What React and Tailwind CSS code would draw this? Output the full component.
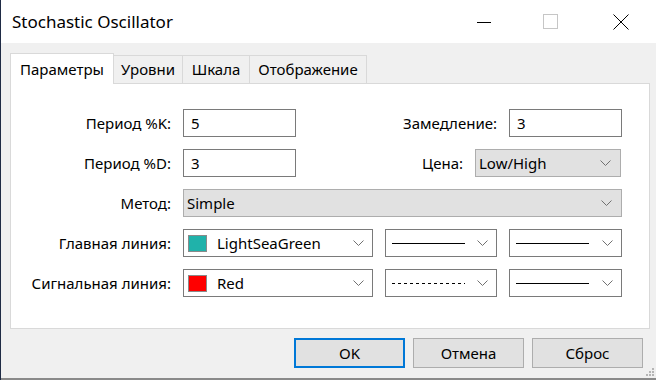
import React from "react";

const font = { fontFamily: '"Noto Sans", "Open Sans", sans-serif' };

function Chevron() {
  return (
    <svg width="11" height="6" viewBox="0 0 11 6" className="shrink-0">
      <polyline points="0.5,0.5 5.5,5.5 10.5,0.5" fill="none" stroke="#707070" strokeWidth="1" />
    </svg>
  );
}

function TextInput({ value, w }) {
  return (
    <div className={`${w} h-[28px] border border-[#7a7a7a] bg-white flex items-center pl-[7px] text-[15px] text-black`}>
      {value}
    </div>
  );
}

function GraySelect({ value, w }) {
  return (
    <div className={`${w} h-[28px] border border-[#adadad] bg-[#e1e1e1] flex items-center justify-between pl-[3px] pr-[9px] text-[15px] text-black`}>
      <span>{value}</span>
      <Chevron />
    </div>
  );
}

function ColorSelect({ color, name }) {
  return (
    <div className="w-[190px] h-[28px] border border-[#7a7a7a] bg-white flex items-center justify-between pl-[4px] pr-[8px] text-[15px] text-black">
      <div className="flex items-center">
        <div className="w-[19px] h-[17px] border border-[#8a8a8a]" style={{ backgroundColor: color }} />
        <span className="ml-[10px]">{name}</span>
      </div>
      <Chevron />
    </div>
  );
}

function LineSelect({ w, dashed, lineW }) {
  return (
    <div className={`${w} h-[28px] border border-[#7a7a7a] bg-white flex items-center justify-between pl-[6px] pr-[8px]`}>
      <svg width={lineW} height="3" className="shrink-0">
        <line x1="0" y1="1.5" x2={lineW} y2="1.5" stroke="#000" strokeWidth="1" strokeDasharray={dashed ? "3 3" : undefined} />
      </svg>
      <Chevron />
    </div>
  );
}

function Label({ children, w = "w-[160px]" }) {
  return <div className={`${w} text-right text-[15px] text-black shrink-0`}>{children}</div>;
}

function Button({ children, primary }) {
  return (
    <div
      className={`w-[111px] h-[30px] flex items-center justify-center text-[15px] text-black bg-[#e1e1e1] ${
        primary ? "border-2 border-[#0078d7]" : "border border-[#adadad]"
      }`}
    >
      {children}
    </div>
  );
}

export default function App() {
  return (
    <div style={font} className="w-[656px] h-[380px] overflow-hidden bg-[#f0f0f0] relative flex flex-col border-l border-[#1f2b45]">
      {/* Title bar */}
      <div className="h-[43px] bg-white flex items-center shrink-0">
        <div className="ml-[11px] text-[17px] text-black">Stochastic Oscillator</div>
        <div className="ml-auto flex items-center">
          <svg width="16" height="16" viewBox="0 0 16 16" className="mr-[51px]">
            <line x1="1" y1="8.5" x2="15" y2="8.5" stroke="#000" strokeWidth="1" />
          </svg>
          <svg width="16" height="16" viewBox="0 0 16 16" className="mr-[54px]">
            <rect x="0.5" y="0.5" width="14" height="14" fill="none" stroke="#c6c6c6" strokeWidth="1" />
          </svg>
          <svg width="16" height="16" viewBox="0 0 16 16" className="mr-[27px]">
            <line x1="0.5" y1="0.5" x2="15.5" y2="15.5" stroke="#000" strokeWidth="1" />
            <line x1="15.5" y1="0.5" x2="0.5" y2="15.5" stroke="#000" strokeWidth="1" />
          </svg>
        </div>
      </div>

      {/* Tabs */}
      <div className="pl-[9px] pt-[10px] flex items-end h-[40px] shrink-0 relative z-10">
        <div className="w-[104px] h-[31px] -mb-px bg-white border border-[#d9d9d9] border-b-0 flex items-center justify-center text-[15px] text-black">
          Параметры
        </div>
        <div className="w-[69px] h-[28px] bg-[#f0f0f0] border border-[#d9d9d9] border-l-0 border-b-0 flex items-center justify-center text-[15px] text-black">
          Уровни
        </div>
        <div className="w-[67px] h-[28px] bg-[#f0f0f0] border border-[#d9d9d9] border-l-0 border-b-0 flex items-center justify-center text-[15px] text-black">
          Шкала
        </div>
        <div className="w-[117px] h-[28px] bg-[#f0f0f0] border border-[#d9d9d9] border-l-0 border-b-0 flex items-center justify-center text-[15px] text-black">
          Отображение
        </div>
      </div>

      {/* Panel */}
      <div className="ml-[9px] w-[640px] h-[246px] bg-white border border-[#d9d9d9] shrink-0 pt-[25px] flex flex-col gap-[12px]">
        <div className="h-[28px] flex items-center">
          <Label>Период %K:</Label>
          <div className="ml-[12px]"><TextInput value="5" w="w-[113px]" /></div>
          <Label w="w-[201px]">Замедление:</Label>
          <div className="ml-[12px]"><TextInput value="3" w="w-[113px]" /></div>
        </div>
        <div className="h-[28px] flex items-center">
          <Label>Период %D:</Label>
          <div className="ml-[12px]"><TextInput value="3" w="w-[113px]" /></div>
          <Label w="w-[167px]">Цена:</Label>
          <div className="ml-[12px]"><GraySelect value="Low/High" w="w-[146px]" /></div>
        </div>
        <div className="h-[28px] flex items-center">
          <Label>Метод:</Label>
          <div className="ml-[12px]"><GraySelect value="Simple" w="w-[439px]" /></div>
        </div>
        <div className="h-[28px] flex items-center">
          <Label>Главная линия:</Label>
          <div className="ml-[12px] flex gap-[12px]">
            <ColorSelect color="#20b2aa" name="LightSeaGreen" />
            <LineSelect w="w-[112px]" lineW={73} />
            <LineSelect w="w-[113px]" lineW={73} />
          </div>
        </div>
        <div className="h-[28px] flex items-center">
          <Label>Сигнальная линия:</Label>
          <div className="ml-[12px] flex gap-[12px]">
            <ColorSelect color="#ff0000" name="Red" />
            <LineSelect w="w-[112px]" lineW={73} dashed />
            <LineSelect w="w-[113px]" lineW={73} />
          </div>
        </div>
      </div>

      {/* Buttons */}
      <div className="flex pl-[293px] pt-[9px] gap-[8px] shrink-0">
        <Button primary>OK</Button>
        <Button>Отмена</Button>
        <Button>Сброс</Button>
      </div>

      {/* Resize grip */}
      <svg width="10" height="10" viewBox="0 0 10 10" className="absolute right-[1px] bottom-[3px]">
        <rect x="7" y="1" width="2" height="2" fill="#b5b5b5" />
        <rect x="4" y="4" width="2" height="2" fill="#b5b5b5" />
        <rect x="7" y="4" width="2" height="2" fill="#b5b5b5" />
        <rect x="1" y="7" width="2" height="2" fill="#b5b5b5" />
        <rect x="4" y="7" width="2" height="2" fill="#b5b5b5" />
        <rect x="7" y="7" width="2" height="2" fill="#b5b5b5" />
      </svg>
      <div className="absolute left-0 right-0 bottom-0 h-[2px] bg-[#8a8a8a]" />
    </div>
  );
}
